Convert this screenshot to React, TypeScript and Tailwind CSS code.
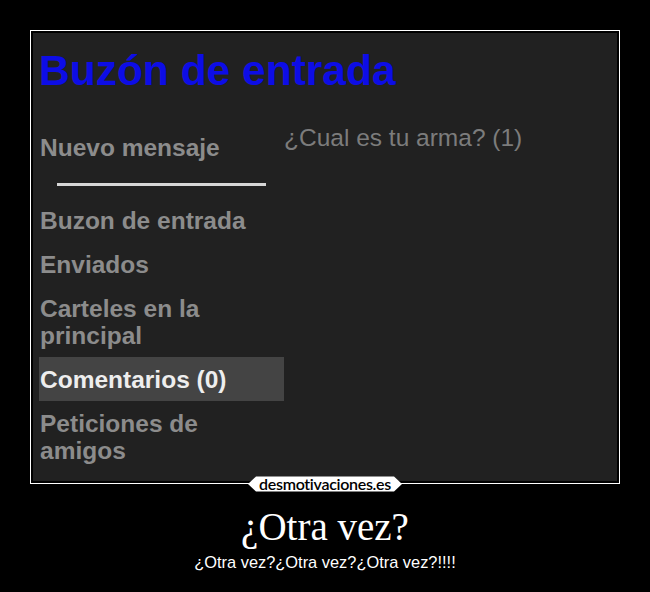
const sans = { fontFamily: '"Liberation Sans", Arial, sans-serif' };

const folders = [
  { label: 'Buzon de entrada' },
  { label: 'Enviados' },
  { label: 'Carteles en la principal' },
  { label: 'Comentarios (0)', active: true },
  { label: 'Peticiones de amigos' },
];

function SiteBadge() {
  return (
    <div className="relative -mt-[8px] flex h-[16px] w-[154px] items-center justify-center">
      <svg className="absolute inset-0" width="154" height="16" viewBox="0 0 154 16">
        <path d="M0 8 L8 0.5 H146 L154 8 L146 15.5 H8 Z" fill="#ffffff" />
      </svg>
      <span
        className="relative text-[16px] leading-none font-semibold tracking-[-0.3px] text-black"
        style={{ fontFamily: '"Lato", "Liberation Sans", sans-serif' }}
      >
        desmotivaciones.es
      </span>
    </div>
  );
}

function Inbox() {
  return (
    <div className="h-full w-full bg-[#212121] pt-[13px] pl-[6px]" style={sans}>
      <h1 className="text-[42.5px] leading-[49px] font-bold text-[#0d0de6]">Buzón de entrada</h1>

      <div className="mt-[30px] flex">
        <aside className="w-[245px] shrink-0">
          <div className="py-[8.5px] pl-[1px] text-[24.5px] leading-[27px] font-bold text-[#8c8c8c]">
            Nuevo mensaje
          </div>
          <div className="mt-[14px] mb-[12px] ml-[18px] h-[3px] w-[209px] bg-[#d6d6d6]" />
          {folders.map((f) => (
            <div
              key={f.label}
              className={`py-[8.5px] pl-[1px] text-[24.5px] leading-[27px] font-bold ${
                f.active ? 'bg-[#444444] text-[#eeeeee]' : 'text-[#8c8c8c]'
              }`}
            >
              {f.label}
            </div>
          ))}
        </aside>

        <div className="-mt-[1px] text-[24.5px] leading-[27px] text-[#7c7c7c]">¿Cual es tu arma? (1)</div>
      </div>
    </div>
  );
}

export default function App() {
  return (
    <div className="flex h-[592px] w-[650px] flex-col items-center bg-black pt-[30px]">
      <div className="h-[454px] w-[590px] border border-white p-[2px]">
        <Inbox />
      </div>
      <SiteBadge />
      <p
        className="mt-[13px] text-[39px] leading-[44px] text-white"
        style={{ fontFamily: '"Liberation Serif", "Times New Roman", serif' }}
      >
        ¿Otra vez?
      </p>
      <p className="mt-[4px] text-[16.4px] leading-[18px] text-white" style={sans}>
        ¿Otra vez?¿Otra vez?¿Otra vez?!!!!
      </p>
    </div>
  );
}
